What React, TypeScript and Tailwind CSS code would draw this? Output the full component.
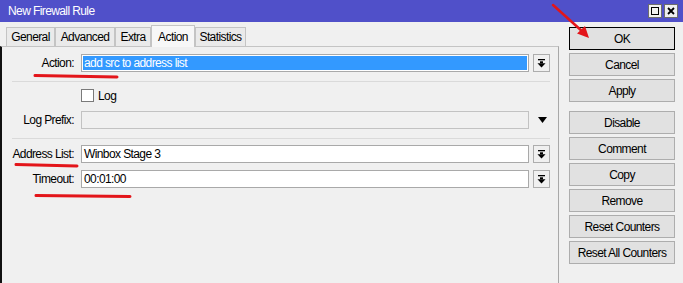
import type { ReactNode } from "react";

const TABS = [
  { name: "General", w: "w-[49px]" },
  { name: "Advanced", w: "w-[60px]" },
  { name: "Extra", w: "w-[36px]" },
  { name: "Action", w: "w-[44px]", active: true },
  { name: "Statistics", w: "w-[51px]" },
];

const BUTTONS: { label: string; main?: boolean; gapBefore?: boolean }[] = [
  { label: "OK", main: true },
  { label: "Cancel" },
  { label: "Apply" },
  { label: "Disable", gapBefore: true },
  { label: "Comment" },
  { label: "Copy" },
  { label: "Remove" },
  { label: "Reset Counters" },
  { label: "Reset All Counters" },
];

function DropIcon() {
  return (
    <svg width="9" height="9" viewBox="0 0 9 9">
      <rect x="1" y="0" width="7" height="1.3" fill="#000" />
      <rect x="3" y="2.3" width="3" height="2" fill="#000" />
      <path d="M0.5 4.3h8L4.5 8.5z" fill="#000" />
    </svg>
  );
}

function DropButton() {
  return (
    <div className="ml-[4px] flex h-[18px] w-[17px] items-center justify-center border border-[#adadad] bg-[#f0f0f0]">
      <DropIcon />
    </div>
  );
}

function Row({ label, children, className = "" }: { label?: string; children: ReactNode; className?: string }) {
  return (
    <div className={`flex items-center ${className}`}>
      <div className="w-[73px] whitespace-nowrap pr-[1px] text-right">{label}</div>
      <div className="ml-[6px] flex items-center">{children}</div>
    </div>
  );
}

function Field({ value }: { value?: string }) {
  return (
    <div className="flex h-[18px] w-[448px] items-center border border-[#a9a9a9] bg-white pl-[2px]">
      {value}
    </div>
  );
}

function Separator() {
  return <div className="ml-[10px] h-px w-[538px] bg-[#dadada]" />;
}

export default function App() {
  return (
    <div className="relative h-[283px] w-[683px] overflow-hidden whitespace-nowrap bg-[#f0f0f0] font-['Liberation_Sans',Arial,sans-serif] text-[12px] leading-none tracking-[-0.6px] text-black">
      {/* title bar */}
      <div className="flex h-[22px] items-center justify-between bg-[#5050c9] pl-[8px] pr-[5px]">
        <span className="text-white">New Firewall Rule</span>
        <div className="flex gap-[2px]">
          <div className="flex h-[14px] w-[14px] items-center justify-center border border-[#6d6d6d] bg-[#f0f0f0]">
            <div className="h-[8px] w-[8px] border border-black" />
          </div>
          <div className="flex h-[14px] w-[14px] items-center justify-center border border-[#6d6d6d] bg-[#f0f0f0]">
            <svg width="8" height="8" viewBox="0 0 8 8">
              <path d="M1 1l6 6M7 1L1 7" stroke="#000" strokeWidth="1.8" />
            </svg>
          </div>
        </div>
      </div>

      <div className="flex">
        {/* left: tabs + page */}
        <div className="w-[559px]">
          <div className="flex h-[24px] items-end pl-[6px]">
            {TABS.map((t) =>
              t.active ? (
                <div
                  key={t.name}
                  className={`relative z-10 -mb-px flex h-[22px] ${t.w} items-center justify-center border border-b-0 border-[#c4c4c4] bg-[#f7f7f7]`}
                >
                  {t.name}
                </div>
              ) : (
                <div
                  key={t.name}
                  className={`flex h-[19px] ${t.w} items-center justify-center border border-b-0 border-[#c4c4c4] bg-[#eaeaea]`}
                >
                  {t.name}
                </div>
              )
            )}
          </div>
          <div className="h-[240px] border-l-2 border-r border-t border-l-[#111] border-r-[#a8a8a8] border-t-[#c4c4c4] pt-[7px]">
            <Row label="Action:">
              <div className="flex h-[18px] w-[448px] items-center border border-[#a9a9a9] bg-white p-px">
                <div className="flex h-full w-full items-center bg-[#3399ff] pl-px text-white">add src to address list</div>
              </div>
              <DropButton />
            </Row>
            <div className="mt-[9px]">
              <Separator />
            </div>
            <Row className="mt-[7px]">
              <div className="h-[13px] w-[13px] border border-[#7a7a7a] bg-white" />
              <span className="ml-[4px]">Log</span>
            </Row>
            <Row label="Log Prefix:" className="mt-[9px]">
              <div className="h-[18px] w-[448px] border border-[#c2c2c2] bg-[#f0f0f0]" />
              <svg className="ml-[9px]" width="9" height="6" viewBox="0 0 9 6">
                <path d="M0 0h9L4.5 6z" fill="#000" />
              </svg>
            </Row>
            <div className="mt-[9px]">
              <Separator />
            </div>
            <Row label="Address List:" className="mt-[6px]">
              <Field value="Winbox Stage 3" />
              <DropButton />
            </Row>
            <Row label="Timeout:" className="mt-[7px]">
              <Field value="00:01:00" />
              <DropButton />
            </Row>
          </div>
        </div>

        {/* right: buttons */}
        <div className="flex flex-col pl-[10px] pt-[5px]">
          {BUTTONS.map((b, i) => (
            <div
              key={b.label}
              className={`flex h-[23px] w-[106px] items-center justify-center border ${
                b.main ? "border-black" : "border-[#adadad]"
              } bg-[#e1e1e1] ${i === 0 ? "" : b.gapBefore ? "mt-[9px]" : "mt-[3px]"}`}
            >
              {b.label}
            </div>
          ))}
        </div>
      </div>

      {/* red annotations drawn over the screenshot */}
      <svg className="pointer-events-none absolute inset-0" width="683" height="283" viewBox="0 0 683 283">
        <g stroke="#e3151a" strokeWidth="3" strokeLinecap="round" fill="none">
          <path d="M160 41.5L192 40.5" strokeWidth="2.5" />
          <path d="M35 75.5L117 77" />
          <path d="M16 164.5L77 166" />
          <path d="M36 195.5L130 196.5" />
          <path d="M553 5L583 32" strokeWidth="2.5" />
        </g>
        <path d="M589 38L577 33.5L585 26z" fill="#e3151a" />
      </svg>
    </div>
  );
}
